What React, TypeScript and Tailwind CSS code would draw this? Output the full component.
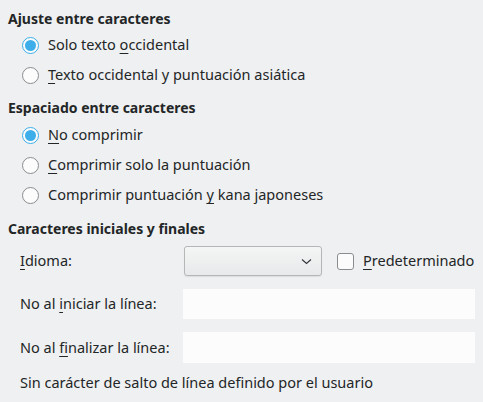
import React from 'react';

const Radio: React.FC<{ checked?: boolean; children: React.ReactNode }> = ({ checked, children }) => (
  <div className="flex h-[30px] items-center pl-[22px]">
    {checked ? (
      <span className="flex h-[17px] w-[17px] items-center justify-center rounded-full border-[1.5px] border-[#3daee9] bg-[#fcfcfc]">
        <span className="h-[11px] w-[11px] rounded-full bg-[#3daee9]" />
      </span>
    ) : (
      <span className="h-[17px] w-[17px] rounded-full border border-[#8a8d8f] bg-[#fcfcfc]" />
    )}
    <span className="ml-[9px]">{children}</span>
  </div>
);

const Heading: React.FC<{ children: React.ReactNode }> = ({ children }) => (
  <div className="flex h-[20px] items-center pl-2 text-[14px] font-bold">{children}</div>
);

const App: React.FC = () => {
  return (
    <div
      className="h-[402px] w-[483px] bg-[#eff0f1] text-[14.5px] text-[#232627]"
      style={{ fontFamily: '"Noto Sans", sans-serif' }}
    >
      <div className="flex flex-col pt-2">
        <Heading>Ajuste entre caracteres</Heading>
        <div className="mt-[2px]">
          <Radio checked>
            Solo texto <u className="underline-offset-[3px]">o</u>ccidental
          </Radio>
          <Radio>
            <u className="underline-offset-[3px]">T</u>exto occidental y puntuación asiática
          </Radio>
        </div>

        <div className="mt-[7px]">
          <Heading>Espaciado entre caracteres</Heading>
        </div>
        <div className="mt-[3px]">
          <Radio checked>
            <u className="underline-offset-[3px]">N</u>o comprimir
          </Radio>
          <Radio>
            <u className="underline-offset-[3px]">C</u>omprimir solo la puntuación
          </Radio>
          <Radio>
            Comprimir puntuación <u className="underline-offset-[3px]">y</u> kana japoneses
          </Radio>
        </div>

        <div className="mt-[8px]">
          <Heading>Caracteres iniciales y finales</Heading>
        </div>

        <div className="mt-[8px] flex items-center pl-5">
          <span className="w-[164px]">
            <u className="underline-offset-[3px]">I</u>dioma:
          </span>
          <div className="flex h-[30px] w-[138px] items-center justify-end rounded-[3px] border border-[#b4b6b8] bg-gradient-to-b from-[#f4f5f5] to-[#e8e9ea] pr-[9px] shadow-[0_1px_1px_rgba(0,0,0,0.08)]">
            <svg width="11" height="7" viewBox="0 0 11 7" fill="none">
              <path d="M1 1.5l4.5 4 4.5-4" stroke="#31363b" strokeWidth="1.1" />
            </svg>
          </div>
          <span className="ml-[15px] h-[17px] w-[17px] rounded-[3px] border border-[#8a8d8f] bg-[#fcfcfc]" />
          <span className="ml-[9px]">
            <u className="underline-offset-[3px]">P</u>redeterminado
          </span>
        </div>

        <div className="mt-[13px] flex items-center pl-5">
          <span className="w-[163px]">
            No al <u className="underline-offset-[3px]">i</u>niciar la línea:
          </span>
          <div className="h-[30px] w-[292px] bg-[#fcfcfc]" />
        </div>

        <div className="mt-[13px] flex items-center pl-5">
          <span className="w-[163px]">
            No al <u className="underline-offset-[3px]">f</u>inalizar la línea:
          </span>
          <div className="h-[31px] w-[292px] bg-[#fcfcfc]" />
        </div>

        <div className="mt-[10px] flex h-[20px] items-center pl-5">
          Sin carácter de salto de línea definido por el usuario
        </div>
      </div>
    </div>
  );
};

export default App;
